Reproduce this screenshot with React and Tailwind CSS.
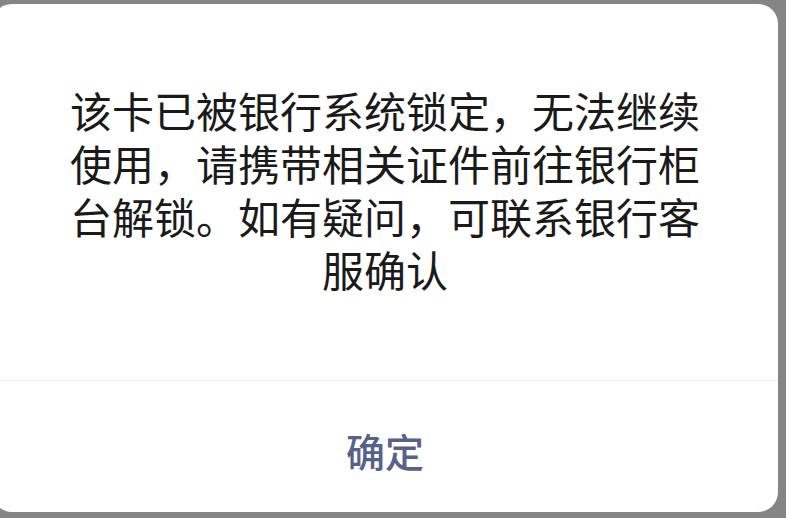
export default function App() {
  return (
    <div className="w-[786px] h-[518px] bg-[#858585] pt-[4px] pr-[8px] pb-[6px] overflow-hidden flex">
      <div className="ml-[-8px] flex-1 bg-white rounded-[20px] flex flex-col" style={{ fontFamily: '"Noto Sans CJK SC", "Noto Sans", sans-serif' }}>
        <div className="pt-[79px] pb-[85px] flex flex-col items-center text-[42px] leading-[53px] text-[#1a1a1a] whitespace-nowrap">
          <p>该卡已被银行系统锁定，无法继续</p>
          <p>使用，请携带相关证件前往银行柜</p>
          <p>台解锁。如有疑问，可联系银行客</p>
          <p>服确认</p>
        </div>
        <div className="h-px bg-[#efefef]" />
        <div className="flex-1 flex items-center justify-center pt-[8px]">
          <span className="text-[39px] font-medium text-[#56628c]">确定</span>
        </div>
      </div>
    </div>
  );
}
